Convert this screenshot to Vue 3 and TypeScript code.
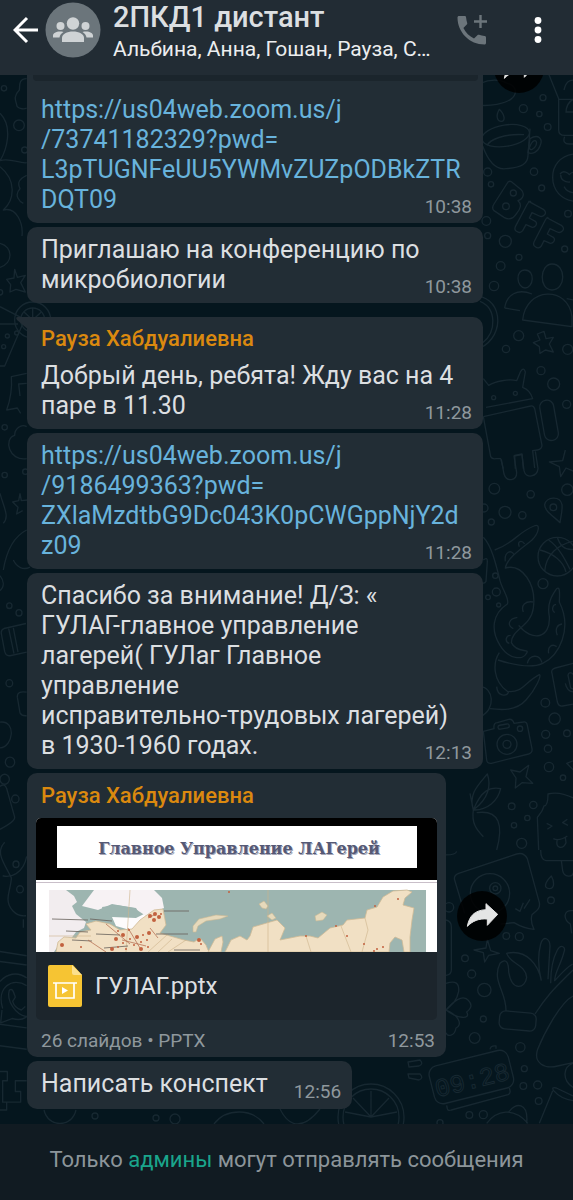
<script setup lang="ts">
interface TextMessage {
  id: number
  text: string
  time: string
  link?: boolean
  sender?: string
}

const messages: TextMessage[] = [
  { id: 2, text: 'Приглашаю на конференцию по\nмикробиологии', time: '10:38' },
  { id: 3, text: 'Добрый день, ребята! Жду вас на 4\nпаре в 11.30', time: '11:28', sender: 'Рауза Хабдуалиевна' },
  { id: 4, text: 'https://us04web.zoom.us/j\n/9186499363?pwd=\nZXlaMzdtbG9Dc043K0pCWGppNjY2d\nz09', time: '11:28', link: true },
  {
    id: 5,
    text: 'Спасибо за внимание! Д/З: «\nГУЛАГ-главное управление\nлагерей( ГУЛаг Главное\nуправление\nисправительно-трудовых лагерей)\nв 1930-1960 годах.',
    time: '12:13',
  },
]

const firstLink = 'https://us04web.zoom.us/j\n/73741182329?pwd=\nL3pTUGNFeUU5YWMvZUZpODBkZTR\nDQT09'
const href = (text: string): string => text.replace(/\n/g, '')

type Dot = [number, number, number]

const dotsTop: Dot[] = [
  [219, 83, 9], [160, 116, 12], [208, 132, 8], [233, 171, 10], [53, 306, 12], [192, 305, 11], [63, 343, 8],
  [215, 354, 9], [294, 431, 10], [49, 453, 13], [53, 497, 9], [106, 514, 18], [147, 562, 9], [92, 588, 13],
  [284, 537, 9], [72, 648, 14], [146, 797, 15], [108, 837, 11], [293, 838, 15], [213, 902, 12], [251, 942, 18],
  [290, 1003, 12], [71, 983, 6], [136, 970, 6],
]
const dotsMiddle: Dot[] = [
  [73, 116, 16], [182, 133, 11], [292, 119, 17], [105, 187, 18], [157, 196, 11], [64, 216, 9], [42, 174, 12],
  [219, 401, 15], [76, 377, 8], [79, 426, 12], [54, 442, 7], [86, 465, 6], [226, 758, 13], [254, 806, 17],
  [227, 853, 12], [291, 850, 10], [234, 896, 11], [237, 951, 14], [279, 983, 8], [125, 1069, 10], [190, 1065, 11],
  [172, 1104, 8], [132, 1126, 8], [155, 1180, 15], [250, 172, 10], [150, 836, 8], [111, 883, 12], [111, 883, 30],
]
const dotsBottom: Dot[] = [
  [363, 151, 10], [57, 172, 14], [229, 258, 10], [268, 260, 12], [105, 325, 10], [125, 372, 12], [163, 420, 20],
  [160, 507, 9], [134, 564, 16], [271, 592, 14], [283, 656, 9], [280, 708, 10], [323, 705, 12], [326, 753, 10],
  [118, 795, 10], [160, 794, 12], [196, 115, 17], [196, 115, 7], [180, 130, 59], [30, 818, 9],
]
const dotsLeft: Dot[] = [
  [12, 55, 8], [57, 166, 16], [74, 240, 9], [0, 667, 8], [22, 798, 6], [50, 789, 6], [11, 830, 6],
  [14, 1072, 8], [14, 1215, 8], [76, 1205, 8],
]
const dotsLowerLeft: Dot[] = [
  [28, 128, 8], [57, 148, 9], [28, 345, 10], [30, 566, 14], [14, 614, 14], [46, 669, 11], [48, 852, 9], [60, 922, 10],
]

const camps: Dot[] = [
  [26, 127, 2], [45, 129, 1], [82, 113, 1], [87, 117, 2], [93, 112, 1], [80, 121, 2], [87, 125, 1], [94, 121, 1],
  [101, 119, 2], [107, 117, 1], [113, 115, 2], [105, 124, 1], [111, 122, 1], [98, 127, 1], [105, 131, 2],
  [90, 131, 1], [112, 129, 1], [114, 98, 2], [119, 96, 2], [123, 99, 2], [118, 102, 2], [125, 96, 1],
  [163, 122, 2], [165, 126, 1], [76, 131, 2], [82, 129, 1], [193, 74, 1], [311, 118, 1], [328, 126, 1],
  [341, 131, 1], [347, 129, 1], [338, 133, 1], [339, 88, 1], [362, 81, 1], [300, 108, 1], [270, 118, 1],
]
</script>

<template>
  <div class="app">
    <header class="bar">
      <button class="icon-btn back" type="button" aria-label="Назад">
        <svg width="26" height="28" viewBox="0 0 26 28" fill="none" stroke="#fff" stroke-width="3">
          <path d="M25 14H3M14 2 2 14l12 12" />
        </svg>
      </button>
      <svg class="avatar" width="56" height="56" viewBox="0 0 56 56" aria-hidden="true">
        <circle cx="28" cy="28" r="27.5" fill="#6b757b" />
        <g fill="#cfd3d5">
          <circle cx="28" cy="21.500" r="6.200" />
          <circle cx="15.500" cy="24" r="4" />
          <circle cx="40.500" cy="24" r="4" />
          <path d="M17 40v-4c0-4 5-6.500 11-6.500S39 32 39 36v4z" />
          <path d="M8 35.500v-2c0-3 5-5 10.500-3.600-2.500 1.400-3.700 3.200-4 5.600z" />
          <path d="M48 35.500v-2c0-3-5-5-10.500-3.600 2.500 1.400 3.700 3.200 4 5.600z" />
        </g>
      </svg>
      <div class="heading">
        <h1>2ПКД1 дистант</h1>
        <p>Альбина, Анна, Гошан, Рауза, С…</p>
      </div>
      <button class="icon-btn call" type="button" aria-label="Групповой звонок">
        <svg width="32" height="32" viewBox="0 0 32 32">
          <path fill="#6c757b" d="M3 2h5.500c.9 0 1.500.5 1.600 1.400.2 2 .5 3.800 1.100 5.500.2.600.1 1.200-.4 1.700L7.400 14c2.300 4.600 6 8.300 10.600 10.600l3.400-3.400c.5-.5 1.100-.6 1.700-.4 1.700.6 3.500 1 5.400 1.100.9 0 1.500.7 1.500 1.600V29c0 .9-.6 1.500-1.500 1.500C13.600 30.500 1.500 18.400 1.500 3.500 1.500 2.600 2.100 2 3 2z" />
          <path fill="none" stroke="#6c757b" stroke-width="2.400" d="M24.500 1v13M18 7.500h13" />
        </svg>
      </button>
      <button class="icon-btn menu" type="button" aria-label="Меню">
        <svg width="8" height="28" viewBox="0 0 8 28" fill="#fff">
          <circle cx="4" cy="4.500" r="3.400" />
          <circle cx="4" cy="14" r="3.400" />
          <circle cx="4" cy="23.500" r="3.400" />
        </svg>
      </button>
    </header>

    <main class="chat">
      <svg class="wallpaper" viewBox="0 75 573 1049" preserveAspectRatio="xMinYMin slice" aria-hidden="true">
        <g transform="translate(470 70) scale(.33333)">
          <circle v-for="(d, i) in dotsTop" :key="i" :cx="d[0]" :cy="d[1]" :r="d[2]" />
          <path d="M30 40c30-12 60-12 82 0 30 8 30 34 10 48-20 14-60 20-90 18" />
          <path d="M88 118c-12 20-6 36 6 36s12-18-6-36z" />
          <ellipse cx="107" cy="197" rx="72" ry="32" transform="rotate(-9 107 197)" />
          <path d="M52 226c6-16 50-36 110-32" />
          <path d="M38 228c18 50 40 72 70 68 50-4 66-16 66-40l6-80" />
          <path d="M180 206c26-16 40 2 30 22-6 18-24 26-36 20zM182 224c10-18 22-14 16 2-6 14-18 16-20 8z" />
          <path d="M236 12l30 74v94c0 10 6 16 18 16h40M266 88h50M284 200c-6 14 0 22 14 22h20M282 60c6-26 16-30 32-30M288 128c0-20 8-36 30-44M290 126h30" />
          <path d="M312 252c-42 6-64 34-64 70 0 40 26 66 64 72M270 312c10-14 26-2 28 2 8-10 14-8 14-2M272 314c0 16 14 24 28 22M282 350c8 14 18 18 30 18" />
          <circle cx="108" cy="409" r="10" />
          <circle cx="130" cy="369" r="9" />
          <path d="M114 336q7-5 14 2l24 20c14 12 8 28-8 34 12 10 8 24-4 38-14 22-28 18-38 12l-30-20q-8-8 0-20z" />
          <path d="M176 394l44 24q12 10 2 18-6 6-14 2l-22-10-8 16 18 10q8 8-2 16-6 4-12 0l-14-6-10 18q-8 10-18 2-8-4-4-14l36-68q4-8 10-8z" />
          <path d="M232 444l42 22q12 10 2 18-6 6-14 2l-22-10-8 16 18 10q8 8-2 16-6 4-12 0l-14-6-8 16q-8 10-18 2-8-4-4-14l34-66q4-8 8-8z" />
          <path d="M165 600c-30 0-26 52 0 54 26 0 32-54 0-54zM246 582c-36 0-42 76 0 78 42 0 44-78 0-78z" />
          <path d="M104 714c6-40 38-60 82-42M104 714l46 8M158 750c10-100 136-104 148-10v30zM290 686l20 4M158 750l146 20" />
          <path d="M222 784l6 22 22-4-12 20 12 24-24-6-16 10-2-20-18-12 20-8-8-18z" />
          <path d="M0 678c100-10 110 120 30 156M30 694c50 20 50 92 8 124" />
          <path d="M40 926l16 20c20-12 60-20 84-14l12-28q10-14 14 2l-8 46c16 6 26 20 30 34l-140 26M40 1040l142-32q8-2 12 8l22 110q0 12-14 14l-14 2 6 52M40 1040l22 120q4 8 16 6l14 0 8 30M136 1196l-2-40 22-4 4 44" />
          <rect x="216" y="990" width="42" height="122" rx="20" transform="rotate(-10 237 1050)" />
        </g>
        <g transform="translate(470 450) scale(.33333)">
          <circle v-for="(d, i) in dotsMiddle" :key="i" :cx="d[0]" :cy="d[1]" :r="d[2]" />
          <path d="M94 28l8 44c8 26 38 20 38-4l-8-50 24-4 6 48c6 26 40 18 42-6l-8-52" />
          <path d="M286 0l-8 32-40 4 30 14 4 30 16-26 24 10" />
          <path d="M270 218c-20-20-46-34-46-54 4-24 46-28 52 0 2 20-4 36-6 54z" />
          <circle cx="262" cy="320" r="58" />
          <path d="M210 300c40 10 70 34 78 66M224 364c4-50 40-80 84-90M236 270c30 20 50 60 64 88M262 262c6 20 20 40 50 36" />
          <path d="M40 262c26 26 40 90 50 130 8 30 30 56 22 70-46 30-50 80-22 124 28 46 70 42 78 26 16-20-26 2-44-34 0-40 60-50 66-104 10-72-34-134-84-120 4-30 56-64 80-84 22-22 26-52 6-42-50 20-60 52-118 72" />
          <path d="M146 526c40 50 96 40 92-26-8-40 8-64 22-84 12-10 8 26 8 40 40 80 0 160-50 184-34 16-90 4-134-10M88 608c-20 30-20 84 24 116 46 6 50-26 96-50 8 0-10 44-40 76-30 34-76 30-108 26" />
          <path d="M106 334c-4-30 20-36 26-20M148 290c-8-18 8-20 16-8M160 486c-8-20 6-34 30-30M130 536c-20-10-14-30 12-34M118 580c-14-4-12-24 4-24M236 610c-4-20 10-30 24-20M172 640c6-26 36-30 44-2M262 556c-8-20 0-32 14-34M254 488c-12-8-4-26 4-24M80 710c2 30 30 30 36 16" />
          <path d="M310 640l-54 14q-14 4-10 16l16 86q4 14 16 12l34-6M294 676c2-14 20-8 18 10l4 34-14-6zM286 700c4 20 14 26 28 26" />
          <path d="M40 844l32-8q-2-18 10-18l34-10q12-2 16 12l28-4q10-2 12 10l14 70q2 12-10 16l-112 28q-12 2-14-10z" />
          <rect x="84" y="824" width="34" height="12" rx="6" transform="rotate(-10 100 830)" />
          <path d="M122 960l28 6 26-20-8 34 20 20-32-2-20 16 2-30zM316 930l-26 10 26 26" />
          <path d="M310 1044c-24-12-54-18-76-12 0 20-2 36-12 36-4 16-10 22-20 34l4 98M230 1120l16 8-14 10M292 1108l-14 10 16 8M250 1166c16 8 30 0 42-8M262 1168c-8 30 18 30 26 10l-2-16" />
          <path d="M10 1080c-16-50 18-78 42-108 12 34 4 74-42 108zM10 1080c24-60 50-70 82-64-8 36-40 66-82 64M10 1080c-6 40 10 60 30 80M20 1088c70-10 80 40 60 112M0 1030l10 50" />
          <path d="M40 330q12-10 12 4l-4 60q-6 10-14 2M30 710c40 0 50 70 0 90" />
        </g>
        <g transform="translate(430 850) scale(.33333)">
          <circle v-for="(d, i) in dotsBottom" :key="i" :cx="d[0]" :cy="d[1]" :r="d[2]" />
          <path d="M332 0q0 30 16 32h81M394 32l4 30c4 22 30 20 32 6M30 14q46 4 50-10" />
          <path d="M104 190l-30-100q-4-14 12-20l174-58q22-6 32 14l36 132c4 20-12 26-22 36q-6 20 6 44c-30-2-60-20-60-20l-40 4" />
          <path d="M256 176l14 8 10-26M282 176l18-28M364 78c-20 20-24 36-6 38 18 0 14-24 6-38zM429 182c-30-4-30 26-8 40l4 28" />
          <path d="M172 268l-4 26-36 6 28 8 4 28 12-20 32-6-26-8z" />
          <path d="M228 484c2-60-44-90-18-144 20-18 26 0 26 26 10 60 50 50 54 16-4-40-50-40-60-72 60-14 96 36 104 82M334 392c-10-40-10-80-2-110 8-30 28-14 28 6l-6 100M362 400c0-40 4-70 20-100 12-20 26-8 20 6-10 40-28 60-28 86 22-24 36-40 54-50M429 360c-50 50-74 70-114 132" />
          <rect x="208" y="486" width="110" height="54" rx="18" transform="rotate(5 263 513)" />
          <path d="M48 210q16 4 16 20v130q0 14-16 16M48 400c30-10 40 0 38 24-6 30-20 40-38 56 20-24 50-50 68-28 16 16 0 30-6 34 14 24-30 20-62-6 40 16 50 46 30 54-4 26-26 26-30 14" />
          <path d="M429 438c-40 20-90 120-106 160-14 40 20 60 60 50l46-10M429 640c-30 10-34 50 0 72" />
          <rect x="2" y="622" width="244" height="116" rx="26" transform="rotate(-14 128 680)" />
          <path d="M50 766l2 10q2 8 12 4l170-46q8-4 6-12l-2-8M180 598q2-12 18-10v8" />
          <text x="22" y="742" transform="rotate(-14 22 742)">09:28</text>
          <path d="M429 738l-50-24q-16-4-8 8 20 24 58 30M368 722l-40 98M170 820c30-40 80-50 124 0M236 786c20-30 60-30 54 34" />
        </g>
        <g transform="translate(0 70) scale(.33333)">
          <circle v-for="(d, i) in dotsLeft" :key="i" :cx="d[0]" :cy="d[1]" :r="d[2]" />
          <path d="M80 26c-26 0-20 24-22 34-20 20-10 34-8 44 0 10 20 16 30 10M0 130c40 40 20 110 0 142 30-10 60 10 80 6M0 290c50 40 44 100 10 130 40-10 60 40 56 78M80 316c-20 10-30 20-20 40-20 20 0 40 10 44M0 520c40 10 40 60 0 72" />
          <path d="M44 598l8 24 24-6-14 22 14 28-28-8-18 8 2-22-12-16 22-4z" />
          <circle cx="98" cy="750" r="54" />
          <circle cx="98" cy="750" r="36" />
          <path d="M98 750v-36M98 750l-26-24M98 750l26-24M0 710l74 38-60 140H0M0 762h54" />
          <path d="M80 910l-46 10q4 50-14 100l32-6 10 16M80 940l-24 2 4 36M80 1166c-54 8-70-60-36-70 0-20 20-36 36-26" />
          <path d="M60 1270l4 22 20-2M60 1270l-4 22-18 4 16 16-4 20 18-10M10 1360c20-20 0-50-10-90M80 1380c-40 20-60 60-70 120" />
        </g>
        <g transform="translate(0 560) scale(.33333 .35714)">
          <circle v-for="(d, i) in dotsLowerLeft" :key="i" :cx="d[0]" :cy="d[1]" :r="d[2]" />
          <path d="M0 44c12 14 14 30 0 42M40 0c10 20 30 30 50 20M78 178l-66 14q-10 4-8 14l10 50q4 14 16 12l50-10M26 192l16 70M40 190l14 68M80 370q-30-4-28 14l8 44q6 10 20 8M0 454c50-6 40 70 0 72M0 634q14-10 20 6l24 80q2 12-44 34" />
          <path d="M14 790c-30 30 0 60 20 100 0 20-10 40-10 60 0 20 20 50 54 46M80 830c-10 50-50 60-72 54M0 1096l80 12M0 1124l80 10M0 1300l80 10M0 1360l80 10M70 1030v-24" />
          <path d="M6 1260l-4 36 34-12c40 10 50-10 50-20M0 1180c20-20 50-30 80-10M8 1256c-20-60 30-90 72-64" />
          <path d="M28 1204c10-6 12 4 18 20l-8 12c4 14 12 20 26 24l12-10M28 1204c-10 30 20 70 50 74" />
          <path d="M0 1432h22v26H8v60h54v-30H46v-30h34M0 1540h20v-20" />
        </g>
        <circle cx="371" cy="1117" r="33" />
        <circle cx="371" cy="1117" r="28" />
        <path d="M371 1117v-26M371 1117l-18-19M371 1117l18-19M371 1117l-26-5M371 1117l26-5M408 1062l12-2q4 4-1 6l-10 1zM408 1074l12 0q4 4-1 6l-10-2zM44 1110c4 18 28 18 32 0M214 1124c12-16 38-16 50 0M280 1109c10 20 24 20 40 0" />
        <circle cx="95" cy="1116" r="3" />
        <circle cx="156" cy="1118" r="3" />
        <circle cx="175" cy="1119" r="5" />
      </svg>

      <div class="thread">
        <article class="bubble cut">
          <div class="preview-end"></div>
          <div class="content">
            <p class="text"><a :href="href(firstLink)">{{ firstLink }}</a></p>
            <time>10:38</time>
          </div>
          <button class="forward upper" type="button" aria-label="Переслать">
            <svg width="50" height="50" viewBox="83 123 150 150"><path fill="#e4e5e5" stroke="#e4e5e5" stroke-width="3" stroke-linejoin="round" d="M114 229c6-30 20-48 56-50v-18l35 32-31 33v-19c-26-2-44 6-60 22z" /></svg>
          </button>
        </article>

        <article v-for="m in messages" :key="m.id" class="bubble" :class="{ group: m.sender }">
          <svg v-if="m.sender" class="tail" width="14" height="14" viewBox="0 0 14 14" aria-hidden="true">
            <path fill="#222d35" d="M2 0h12v14L1 3Q-1 0 2 0z" />
          </svg>
          <h2 v-if="m.sender">{{ m.sender }}</h2>
          <div class="content">
            <p class="text">
              <a v-if="m.link" :href="href(m.text)">{{ m.text }}</a>
              <template v-else>{{ m.text }}</template>
            </p>
            <time>{{ m.time }}</time>
          </div>
        </article>

        <article class="bubble file">
          <h2>Рауза Хабдуалиевна</h2>
          <div class="card">
            <svg class="slide" viewBox="0 0 401 134" role="img" aria-label="Главное Управление ЛАГерей">
              <rect width="401" height="134" fill="#fff" />
              <rect width="401" height="62" fill="#000" />
              <rect y="64" width="401" height="1" fill="#c9bfc9" />
              <rect x="21" y="8" width="360" height="42" fill="#fff" />
              <g class="slide-title">
                <text class="glow" x="204" y="37" text-anchor="middle">Главное  Управление ЛАГерей</text>
                <text x="203" y="36" text-anchor="middle">Главное  Управление ЛАГерей</text>
              </g>
              <rect x="13" y="72" width="377" height="62" fill="#9db5b0" />
              <path fill="#f2edef" d="M13 72h17l8 6 3 6-5 4 4 8 10 8-2 6-8 4-6 8-12 6-4 6h-5z" />
              <path fill="#f7f2f4" d="M58 72h60l8 8 2 10-18 8-12-8-22-4-14 6-16-4 6-8z" />
              <path fill="#9db5b0" d="M66 89l14-2 20 3 3 5-6 4-18-2-12-3z" />
              <path fill="#fdfbfc" d="M76 99l24 1 8-4 4 4-4 8-14 4-14-4z" />
              <path fill="#f1e0c4" stroke="#cfba96" stroke-width=".8" d="M20 134l2-10 6-5 12 1 4-6 11-2-5-6 10-3 14 3 10 6 12-1 8-9 14-10 9-1 3 16-6 8 10 3 14 4 10 2 6-4 6 7 2 5 4 4z" />
              <path fill="#f1e0c4" stroke="#cfba96" stroke-width=".8" d="M172 134l7-13 7-3 1 6-2 10zM189 134l6-12 9-4 7 4 3-4 3-9 17-5 7-2 8 8-5 12 20-4h10l8 2 12-10 13-3 4-5 18-2 2-8 10-3 6-10 10-6 14-1 5 2-7 6-2 7 11 3-2 12-2 17v15h-6l-2-12-7-3-5 6-1 9z" />
              <path fill="#e6d9bb" stroke="#cbb994" stroke-width=".6" d="M157 108l6-7 17-4 12 1-8 3-14 2-8 5-2 6-3 0zM223 86l5-3 4 5-2 3-4-1zM231 98l5-3 4 5-4 2zM279 98l7-4 5 3-4 5-7 1z" />
              <path fill="none" stroke="#ccb38b" stroke-width=".6" d="M94 72l-4 62M132 116l-20 18M136 121l-14 13M150 122l-18 12M232 72v62M270 118l5 16M305 108l10 26M329 100l3 12-6 22M13 118h42" />
              <path fill="none" stroke="#66605a" stroke-width="1" d="M16 101l36 1M54 101l22 2M30 113l22 1M36 122l20 1M60 116l24 1M128 93l25 0M120 116l32 0M138 132l26 0M68 130l24-2" opacity=".8" />
              <path fill="none" stroke="#b06448" stroke-width=".7" d="M52 122l18 12M70 106l24 20M92 110l12 20M114 110l8 10M86 122l24 6M112 100l8-4" />
              <circle v-for="(c, i) in camps" :key="i" :cx="c[0]" :cy="c[1]" :r="c[2]" fill="#c2613f" />
            </svg>
            <div class="file-row">
              <svg width="34" height="42" viewBox="0 0 34 42" aria-hidden="true">
                <path fill="#f6c433" d="M2 0h23l9 10v30q0 2-2 2H2q-2 0-2-2V2q0-2 2-2z" />
                <path fill="#fbe08e" d="M24 0l10 10H26q-2 0-2-2z" />
                <path fill="none" stroke="#fff" stroke-width="1.700" d="M5 18h24M8 18v15h18V18" />
                <path fill="#fff" d="M14 22v7l6-3.500z" />
              </svg>
              <span>ГУЛАГ.pptx</span>
            </div>
          </div>
          <div class="meta">
            <span>26 слайдов • PPTX</span>
            <time>12:53</time>
          </div>
          <button class="forward" type="button" aria-label="Переслать">
            <svg width="50" height="50" viewBox="83 123 150 150"><path fill="#e4e5e5" stroke="#e4e5e5" stroke-width="3" stroke-linejoin="round" d="M114 229c6-30 20-48 56-50v-18l35 32-31 33v-19c-26-2-44 6-60 22z" /></svg>
          </button>
        </article>

        <article class="bubble short">
          <p class="text">Написать конспект</p>
          <time>12:56</time>
        </article>
      </div>
    </main>

    <footer class="notice">
      <p>Только <a href="#admins">админы</a> могут отправлять сообщения</p>
    </footer>
  </div>
</template>

<style>
body {
  margin: 0;
  background: #111b22;
}
</style>

<style scoped>
.app {
  display: flex;
  flex-direction: column;
  min-height: 100vh;
  font-family: Roboto, 'Noto Sans', sans-serif;
  color: #dcdfe1;
}

h1,
h2,
p {
  margin: 0;
}

a {
  color: #68b3dc;
  text-decoration: none;
}

button {
  padding: 0;
  border: 0;
  background: none;
  cursor: pointer;
}

svg {
  display: block;
}

.bar {
  position: relative;
  z-index: 2;
  box-sizing: border-box;
  display: flex;
  align-items: flex-start;
  height: 75px;
  padding: 2px 31px 0 13px;
  background: #222c34;
}

.icon-btn {
  display: flex;
  align-items: center;
  height: 56px;
}

.avatar {
  flex: none;
  margin-left: 6px;
}

.heading {
  flex: 1;
  min-width: 0;
  margin-left: 12px;
}

.heading h1 {
  font-size: 29px;
  font-weight: 500;
  line-height: 30px;
}

.heading p {
  overflow: hidden;
  font-size: 21px;
  line-height: 34px;
  color: #eceeef;
  text-overflow: ellipsis;
  white-space: nowrap;
}

.call {
  margin-right: 46px;
}

.chat {
  position: relative;
  flex: 1;
  overflow: hidden;
  background: #05161e;
}

.wallpaper {
  position: absolute;
  inset: 0;
  width: 100%;
  height: 100%;
  fill: none;
  stroke: #172831;
  stroke-width: 1.3px;
  stroke-linejoin: round;
}

.wallpaper g {
  stroke-width: 4px;
}

.wallpaper text {
  font: 76px 'Liberation Mono', monospace;
  stroke-width: 3px;
}

.thread {
  position: relative;
  display: flex;
  flex-direction: column;
  align-items: flex-start;
  gap: 4px;
  padding: 0 27px 15px;
}

.bubble {
  position: relative;
  box-sizing: border-box;
  width: 100%;
  max-width: 456px;
  padding: 8px 11px 8px 14px;
  border-radius: 10px;
  background: #222d35;
}

.cut {
  padding-top: 0;
  border-radius: 0 0 10px 10px;
}

.preview-end {
  height: 6px;
  margin: 0 -6px 14px -8px;
  border-radius: 0 0 4px 4px;
  background: #1b252c;
}

.group {
  margin-top: 10px;
  border-top-left-radius: 0;
}

.tail {
  position: absolute;
  top: 0;
  left: -11px;
}

.bubble h2 {
  margin-bottom: 8px;
  font-size: 22px;
  font-weight: 500;
  line-height: 28px;
  color: #db890f;
}

.content {
  display: grid;
}

.content > * {
  grid-area: 1 / 1;
}

.text {
  font-size: 25px;
  line-height: 30px;
  white-space: pre-line;
}

time {
  place-self: end;
  font-size: 19px;
  line-height: 24px;
  color: #8f989d;
}

.content time {
  margin-bottom: -4px;
}

.file {
  max-width: 419px;
  padding: 9px 9px 4px;
}

.file h2 {
  margin-left: 5px;
}

.card {
  overflow: hidden;
  border-radius: 5px;
  background: #1c252c;
}

.slide {
  width: 100%;
}

.slide-title {
  font: bold 16px 'DejaVu Serif', serif;
  white-space: pre;
  fill: #555975;
}

.slide-title .glow {
  fill: #a5a7b8;
}

.file-row {
  display: flex;
  align-items: center;
  gap: 13px;
  height: 68px;
  padding: 0 12px;
  font-size: 24px;
}

.meta {
  display: flex;
  justify-content: space-between;
  margin: 9px 2px 0 5px;
  font-size: 19px;
  line-height: 24px;
  color: #8f989d;
}

.forward {
  position: absolute;
  top: 118px;
  left: calc(100% + 11px);
  border-radius: 50%;
  background: rgba(0, 0, 0, 0.85);
}

.upper {
  top: -32px;
}

.short {
  display: flex;
  align-items: flex-end;
  gap: 26px;
  width: auto;
  padding-bottom: 10px;
}

.short time {
  margin-bottom: -5px;
}

.notice {
  display: flex;
  align-items: center;
  justify-content: center;
  min-height: 76px;
  background: #111b22;
  font-size: 22px;
  line-height: 28px;
  color: #8c959a;
}

.notice p {
  margin-top: -4px;
}

.notice a {
  color: #1aa58c;
}
</style>
